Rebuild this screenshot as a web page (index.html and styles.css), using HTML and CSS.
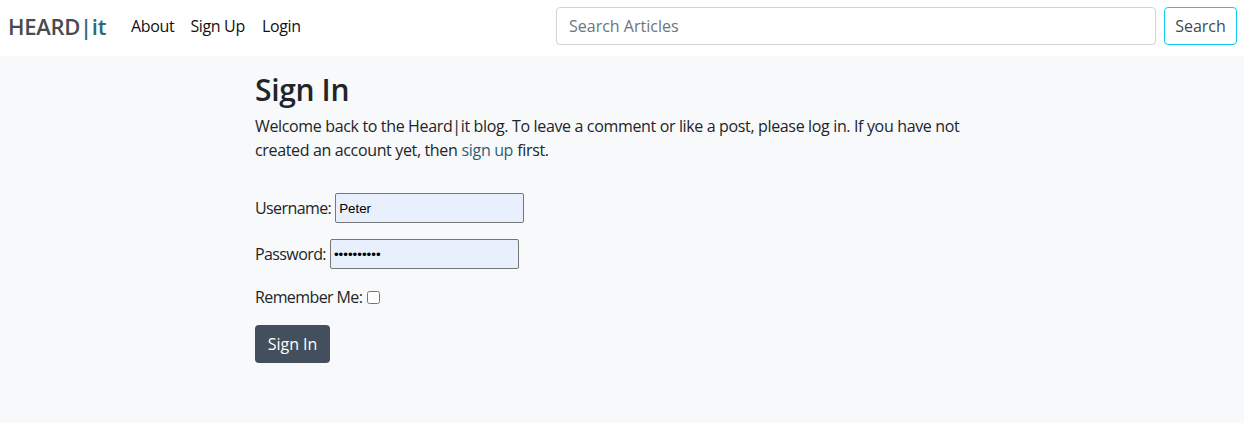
FILE: index.html
```html
<!DOCTYPE html>
<html lang="en">
<head>
<meta charset="utf-8">
<title>Sign In | HEARD|it</title>
<link rel="stylesheet" href="styles.css">
</head>
<body>
<nav class="navbar">
  <a class="brand" href="#"><span class="brand-main">HEARD</span><span class="brand-accent">|it</span></a>
  <ul class="nav-links">
    <li><a href="#">About</a></li>
    <li><a href="#">Sign Up</a></li>
    <li><a href="#">Login</a></li>
  </ul>
  <form class="search">
    <input class="search-input" type="search" placeholder="Search Articles">
    <button class="search-btn" type="button">Search</button>
  </form>
</nav>
<main class="page">
  <div class="content">
    <h2 class="title">Sign In</h2>
    <p class="intro">Welcome back to the Heard|it blog. To leave a comment or like a post, please log in. If you have not created an account yet, then<span class="sp"> </span><a class="link" href="#">sign up</a><span class="sp"> </span>first.</p>
    <form class="login">
      <p class="field"><label for="u">Username:</label><input id="u" class="text-input" type="text" value="Peter"></p>
      <p class="field"><label for="p">Password:</label><input id="p" class="text-input" type="password" value="1234567890"></p>
      <p class="field"><label for="r">Remember Me:</label><input id="r" class="check" type="checkbox"></p>
      <button class="submit" type="button">Sign In</button>
    </form>
  </div>
</main>
</body>
</html>
```
FILE: styles.css
```css
* { box-sizing: border-box; }
html, body { margin: 0; height: 100%; }
body {
  font-family: "Open Sans", "Noto Sans", sans-serif;
  font-size: 16px;
  line-height: 1.5;
  color: #212529;
  background: #f8f9fa;
  letter-spacing: -0.35px;
}
.navbar {
  height: 56px;
  background: #fff;
  display: flex;
  align-items: center;
  padding: 0 7px 4px 8px;
}
.brand {
  font-size: 22px;
  font-weight: 600;
  text-decoration: none;
  margin-right: 25px;
  letter-spacing: -0.3px;
}
.brand-main { color: #4a4a4f; }
.brand-accent { color: #2b6b78; }
.nav-links {
  list-style: none;
  display: flex;
  margin: 0;
  padding: 0;
  gap: 16px;
}
.nav-links li:last-child { margin-left: 1px; }
.nav-links a {
  color: #111;
  text-decoration: none;
}
.search {
  margin-left: auto;
  display: flex;
  gap: 8px;
}
.search-input {
  width: 600px;
  height: 38px;
  border: 1px solid #ced4da;
  border-radius: 4px;
  padding: 6px 12px;
  font: inherit;
  color: #212529;
  background: #fff;
}
.search-input::placeholder { color: #6c757d; }
.search-btn {
  height: 38px;
  width: 73px;
  padding: 0;
  border: 1px solid #0dcaf0;
  border-radius: 4px;
  background: #fff;
  color: #3d4a55;
  font: inherit;
}
.page { padding-top: 16px; }
.content {
  width: 736px;
  margin-left: 255px;
}
.title {
  font-size: 30px;
  font-weight: 600;
  line-height: 1.2;
  margin: 0 0 6px;
}
.intro { margin: 0 0 31px; }
.sp { letter-spacing: 0; }
.link { color: #2f5f78; text-decoration: none; }
.login { margin: 0; }
.field {
  margin: 0 0 16px;
  display: flex;
  align-items: center;
  gap: 4px;
  min-height: 24px;
}
.field label { letter-spacing: -0.6px; }
.text-input {
  width: 189px;
  height: 30px;
  border: 1px solid #767676;
  border-radius: 2px;
  background: #e8f0fe;
  font-family: "Liberation Sans", Arial, sans-serif;
  font-size: 13.33px;
  letter-spacing: 0;
  padding: 1px 3px;
  color: #000;
}
.check {
  width: 13px;
  height: 13px;
  margin: 0 0 0 1px;
}
.submit {
  display: block;
  background: #444f5d;
  color: #fff;
  border: 0;
  border-radius: 4px;
  height: 38px;
  width: 75px;
  padding: 0;
  font: inherit;
}
```
